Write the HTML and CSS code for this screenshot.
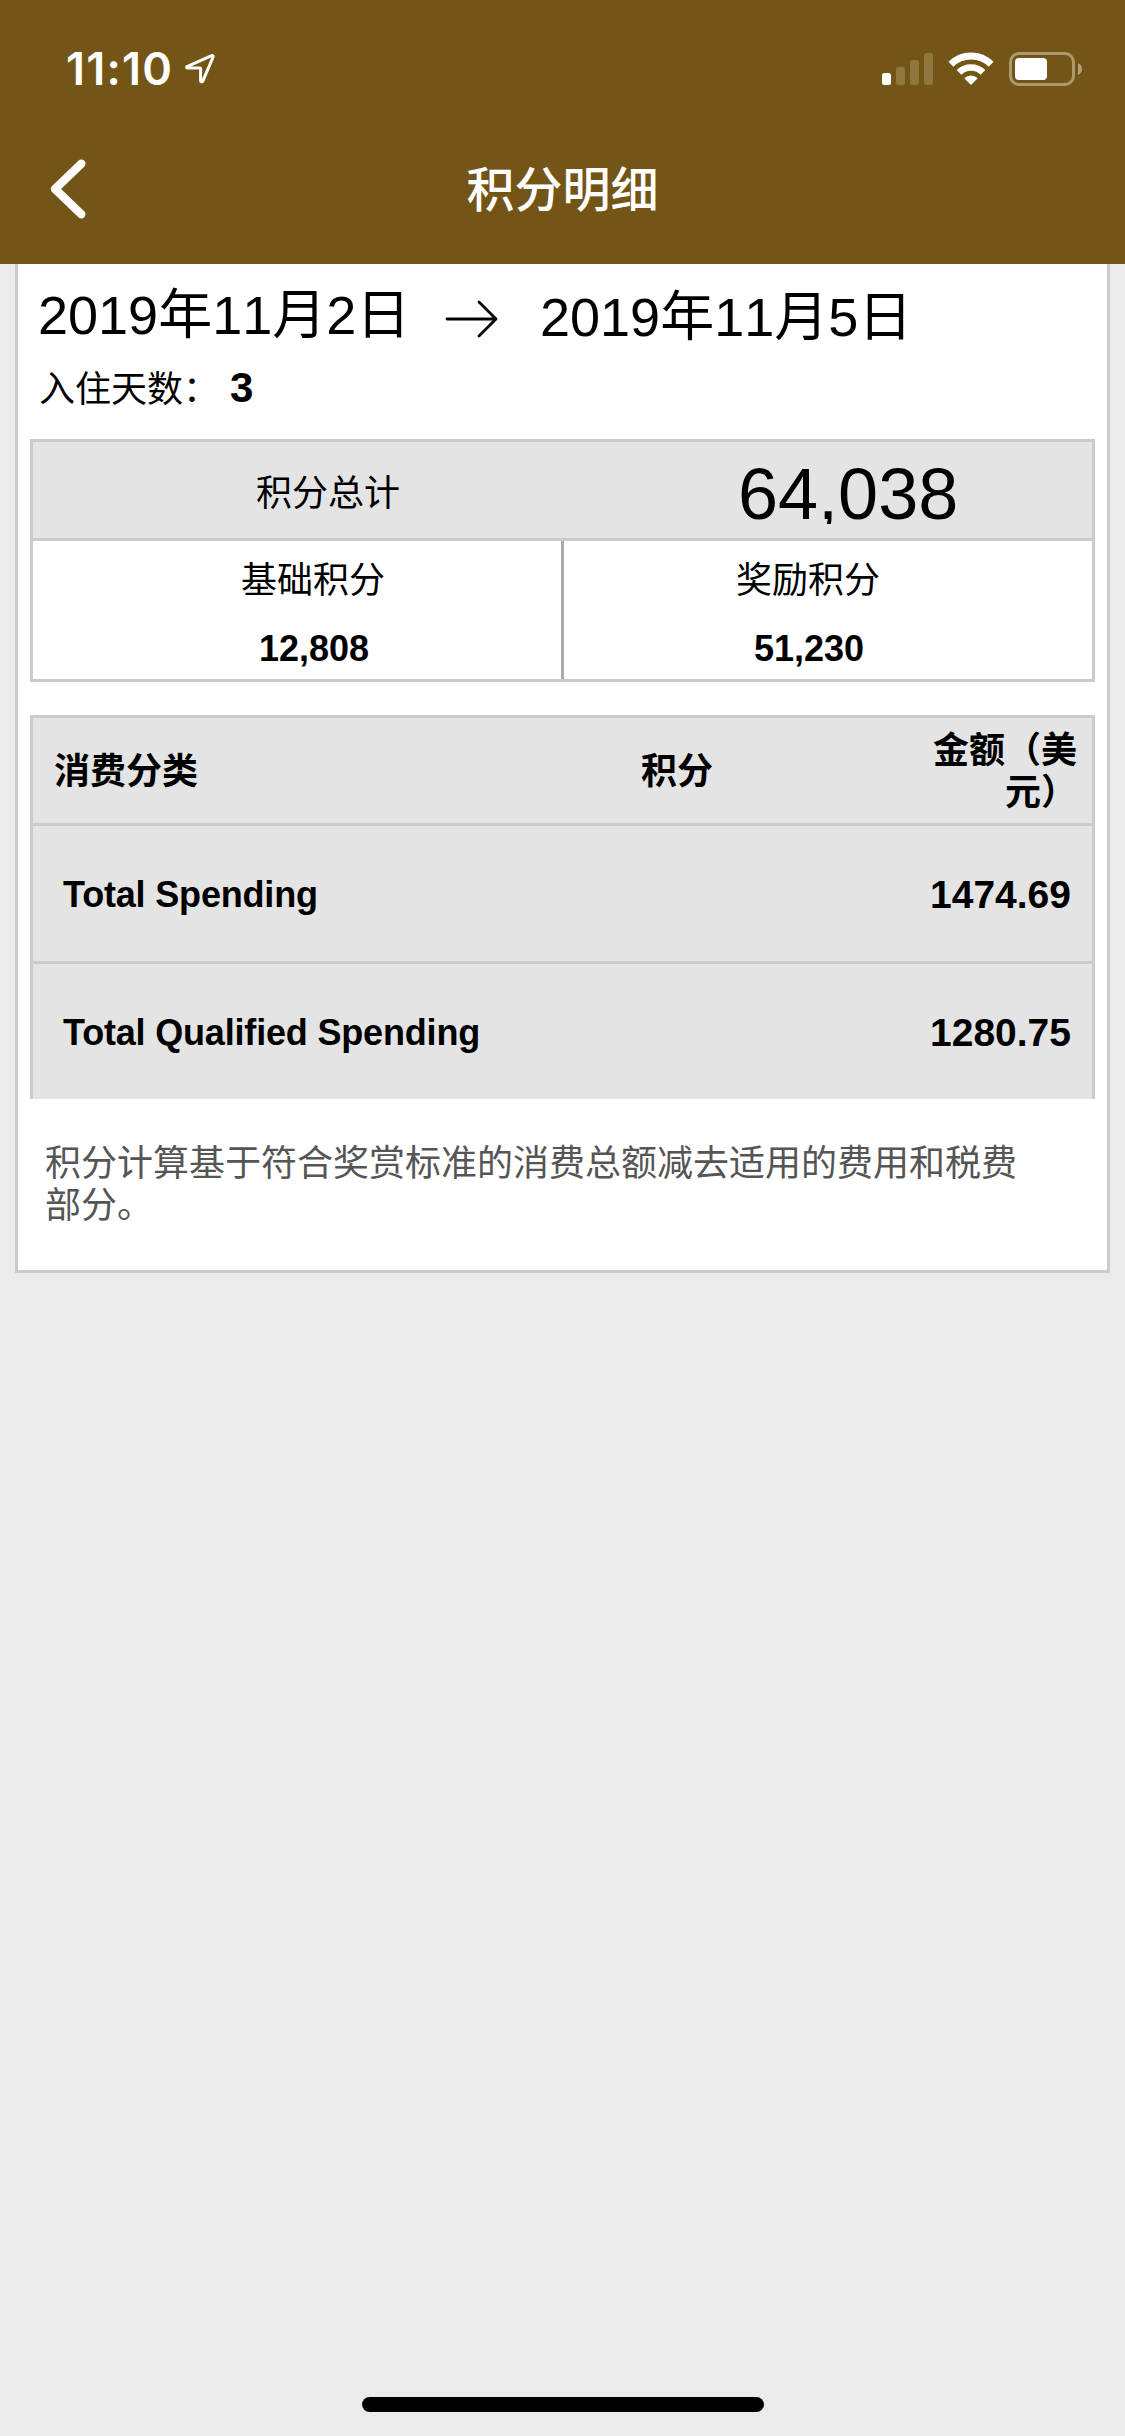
FILE: index.html
```html
<!DOCTYPE html>
<html lang="zh-CN">
<head>
<meta charset="utf-8">
<title>积分明细</title>
<link rel="stylesheet" href="styles.css">
</head>
<body>
<header class="header">
  <div class="status">
    <div class="status-left">
      <span class="time">11:10</span>
      <svg class="location" width="32" height="32" viewBox="0 0 32 32"><path d="M3 13.6 27.600 2.600c1-.4 1.900.4 1.500 1.400L18.800 28.200c-.5 1.100-2.200.8-2.200-.4V15.600c0-.4-.3-.7-.7-.7H3.300c-.8 0-1-.9-.3-1.300Z" fill="none" stroke="#fff" stroke-width="3" stroke-linejoin="round"/></svg>
    </div>
    <div class="status-right">
      <svg class="signal" width="51" height="32" viewBox="0 0 51 32"><rect x="0" y="20" width="9" height="12" rx="2.500" fill="#fff"/><g fill="#8f773f"><rect x="14" y="14" width="9" height="18" rx="2.500"/><rect x="28" y="7" width="9" height="25" rx="2.500"/><rect x="42" y="0" width="9" height="32" rx="2.500"/></g></svg>
      <svg class="wifi" width="46" height="34" viewBox="0 0 46 34" fill="none" stroke="#fff"><path d="M2.900 12.200a28.500 28.500 0 0 1 40.200 0" stroke-width="7"/><path d="M11 20.400a17 17 0 0 1 24 0" stroke-width="6.600"/><path d="M16.300 26.200a9.500 9.500 0 0 1 13.400 0L23 33Z" fill="#fff" stroke="none"/></svg>
      <svg class="battery" width="74" height="34" viewBox="0 0 74 34"><rect x="1.500" y="1.500" width="63" height="31" rx="8.500" fill="none" stroke="#ac9a6c" stroke-width="3"/><rect x="6" y="6" width="32" height="22" rx="4" fill="#fff"/><path d="M69 11q4 2 4 6t-4 6Z" fill="#b3a277"/></svg>
    </div>
  </div>
  <div class="navbar">
    <svg class="back" width="38" height="62" viewBox="0 0 38 62"><path d="M32.300 5.700 6 31l26.300 25.300" fill="none" stroke="#fff" stroke-width="8.400" stroke-linecap="round" stroke-linejoin="round"/></svg>
    <h1 class="title">积分明细</h1>
  </div>
</header>
<main class="card">
  <div class="dates">
    <span class="date">2019年11月2日</span>
    <svg class="arrow" width="54" height="40" viewBox="0 0 54 40"><path d="M2 20h49M34 3l17 17-17 17" fill="none" stroke="#000" stroke-width="2.800" stroke-linecap="round" stroke-linejoin="round"/></svg>
    <span class="date date-out">2019年11月5日</span>
  </div>
  <div class="nights">入住天数：<b class="nights-count">3</b></div>
  <section class="summary">
    <div class="total">
      <span class="total-label">积分总计</span>
      <span class="total-value">64,038</span>
    </div>
    <div class="parts">
      <div class="part"><span>基础积分</span><b class="part-value">12,808</b></div>
      <div class="part part-bonus"><span>奖励积分</span><b class="part-value">51,230</b></div>
    </div>
  </section>
  <section class="spending">
    <div class="row row-head"><span>消费分类</span><span>积分</span><span class="amount-head">金额（美<br>元）</span></div>
    <div class="row"><span class="name">Total Spending</span><span></span><span class="amount">1474.69</span></div>
    <div class="row"><span class="name">Total Qualified Spending</span><span></span><span class="amount">1280.75</span></div>
  </section>
  <p class="note">积分计算基于符合奖赏标准的消费总额减去适用的费用和税费部分。</p>
</main>
<div class="home-indicator"></div>
</body>
</html>
```
FILE: styles.css
```css
* {
  box-sizing: border-box;
}

body {
  margin: 0;
  width: 1125px;
  height: 2436px;
  display: flex;
  flex-direction: column;
  background: #ebebeb;
  color: #000;
  font-family: "Liberation Sans", "Noto Sans CJK SC", sans-serif;
  font-size: 36px;
  line-height: 42px;
  overflow: hidden;
}

svg {
  display: block;
  flex: none;
}

.header {
  height: 264px;
  flex: none;
  background: #745518;
  color: #fff;
}

.status {
  height: 132px;
  display: flex;
  justify-content: space-between;
  padding: 52px 42px 0 66px;
}

.status-left,
.status-right {
  display: flex;
  align-items: flex-start;
}

.time {
  width: 118px;
  font-family: Inter, sans-serif;
  font-size: 45px;
  font-weight: 600;
  line-height: 34px;
  letter-spacing: 1.2px;
}

.location {
  margin-top: 1px;
}

.signal {
  margin: 1px 15px 0 0;
}

.wifi {
  margin-right: 15px;
}

.navbar {
  height: 132px;
  display: grid;
  grid-template-columns: 1fr auto 1fr;
  align-items: start;
}

.back {
  margin: 26px 0 0 49px;
}

.title {
  margin: 18px 0 0;
  font-size: 48px;
  font-weight: 500;
  line-height: 72px;
  font-family: "Noto Sans CJK SC", sans-serif;
}

.card {
  height: 1009px;
  margin: 0 15px;
  flex: none;
  display: flex;
  flex-direction: column;
  background: #fff;
  border: 3px solid #cbcbcb;
  border-top: 0;
  padding: 0 12px;
}

.dates {
  height: 103px;
  display: flex;
  padding: 21px 0 0 8px;
  font-size: 54px;
  line-height: 60px;
  font-kerning: none;
}

.date {
  width: 372px;
  white-space: nowrap;
}

.arrow {
  margin: 14px 41px 0 35px;
}

.date-out {
  padding-top: 2px;
}

.nights {
  height: 72px;
  padding-left: 9px;
}

.nights-count {
  margin-left: 11px;
  font-size: 42px;
  font-weight: 700;
}

.summary {
  height: 243px;
  flex: none;
  border: 3px solid #cbcbcb;
}

.total {
  height: 99px;
  display: grid;
  grid-template-columns: 590px 1fr;
  background: #e4e4e4;
  border-bottom: 3px solid #cbcbcb;
}

.total-label {
  padding-top: 31px;
  text-align: center;
}

.total-value {
  height: 82px;
  padding: 19px 0 0 115px;
  font-size: 72px;
  line-height: 66px;
  overflow: hidden;
}

.parts {
  height: 138px;
  display: grid;
  grid-template-columns: 528px 1fr;
}

.part {
  padding: 19px 0 0 208px;
  display: flex;
  flex-direction: column;
}

.part-bonus {
  padding-left: 172px;
  border-left: 3px solid #a8a8a8;
}

.part-value {
  margin-top: 26px;
  padding-left: 18px;
  font-weight: 700;
}

.spending {
  height: 384px;
  flex: none;
  margin-top: 33px;
  background: #e4e4e4;
  border: 3px solid #cbcbcb;
  border-bottom: 0;
}

.row {
  height: 138px;
  display: grid;
  grid-template-columns: 586px 1fr 1fr;
  align-items: center;
  padding: 2px 21px 0 22px;
  border-bottom: 3px solid #cbcbcb;
  font-weight: 700;
}

.row:last-child {
  height: 135px;
  border-bottom: 0;
}

.row-head {
  height: 108px;
  padding: 3px 15px 0 21px;
}

.name {
  padding-left: 8px;
  white-space: nowrap;
  letter-spacing: -0.18px;
}

.row-head span:nth-child(2) {
  padding-left: 1px;
}

.amount {
  font-size: 39px;
  text-align: right;
}

.amount-head {
  text-align: right;
}

.note {
  margin: 0;
  padding: 44px 60px 0 15px;
  color: #555;
}

.home-indicator {
  width: 402px;
  height: 15px;
  margin: auto auto 24px 362px;
  flex: none;
  background: #000;
  border-radius: 8px;
}
```
